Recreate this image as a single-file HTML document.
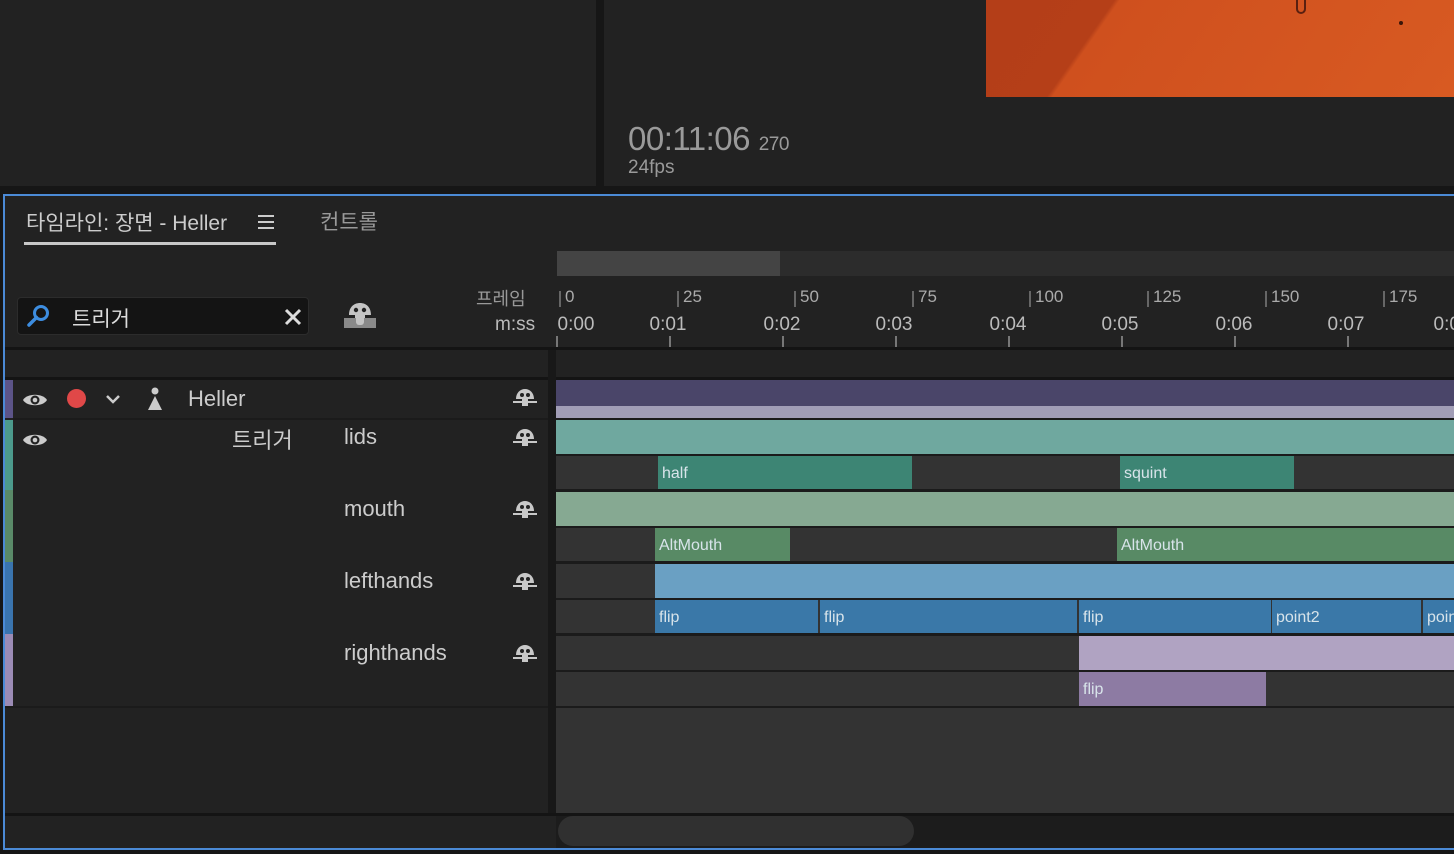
<!DOCTYPE html>
<html><head><meta charset="utf-8"><style>
*{margin:0;padding:0;box-sizing:border-box}
body{width:1454px;height:854px;background:#161616;position:relative;overflow:hidden;font-family:"Liberation Sans","Noto Sans CJK KR",sans-serif;color:#bbb}
.a{position:absolute}
.t{position:absolute;white-space:nowrap}
.clip{position:absolute;height:34px;color:#d8e4ea;font-size:16px;line-height:36px;padding-left:4px}
.fl{position:absolute;font-size:17px;color:#aaa;top:287px}
.fl:before{content:"";position:absolute;left:-6px;top:4px;width:2px;height:16px;background:#666}
.ms{position:absolute;font-size:19px;color:#bbb;top:314px;transform:translateX(-50%)}
.tk{position:absolute;top:336px;width:2px;height:11px;background:#777}
.lbl{position:absolute;font-size:22px;color:#ccc}
.ic{position:absolute;left:513px}
</style></head><body>
<div class="a" style="left:0;top:0;width:596px;height:186px;background:#222"></div>
<div class="a" style="left:604px;top:0;width:850px;height:186px;background:#222"></div>
<div class="a" style="left:986px;top:0;width:468px;height:97px;background:linear-gradient(125deg,#b43e18 0%,#b53f18 24%,#cf501e 25%,#d85a22 100%)"></div>
<div class="a" style="left:1296px;top:0;width:10px;height:14px;border:2px solid #5a2010;border-top:none;border-radius:0 0 6px 6px"></div>
<div class="a" style="left:1399px;top:21px;width:4px;height:4px;background:#3a1508;border-radius:2px"></div>
<div class="t" style="left:628px;top:120px;font-size:33px;color:#9a9a9a;letter-spacing:-0.5px">00:11:06 <span style="font-size:19px">270</span></div>
<div class="t" style="left:628px;top:157px;font-size:19px;color:#9a9a9a">24fps</div>

<div class="a" style="left:3px;top:194px;width:1454px;height:656px;background:#222;border:2px solid #4b8ad6;border-right:none"></div>
<div class="t" style="left:26px;top:207px;font-size:21px;color:#ccc">타임라인: 장면 - Heller</div>
<div class="a" style="left:258px;top:215px;width:16px;height:2px;background:#ccc;box-shadow:0 6px 0 #ccc,0 12px 0 #ccc"></div>
<div class="a" style="left:24px;top:242px;width:252px;height:3px;background:#c8c8c8"></div>
<div class="t" style="left:320px;top:206px;font-size:21px;color:#999">컨트롤</div>

<div class="a" style="left:557px;top:251px;width:897px;height:25px;background:#2c2c2c"></div>
<div class="a" style="left:557px;top:251px;width:223px;height:25px;background:#444"></div>

<div class="a" style="left:17px;top:297px;width:292px;height:38px;background:#141414;border:1px solid #2c2c2c;border-radius:4px"></div>
<svg class="a" style="left:26px;top:303px" width="26" height="26" viewBox="0 0 26 26"><circle cx="15" cy="10" r="6.5" fill="none" stroke="#3d8de0" stroke-width="3"/><path d="M10.5 14.5L3 22" stroke="#3d8de0" stroke-width="3.5" stroke-linecap="round"/></svg>
<div class="t" style="left:72px;top:303px;font-size:21px;color:#ddd">트리거</div>
<svg class="a" style="left:283px;top:307px" width="20" height="20"><path d="M3 3L17 17M17 3L3 17" stroke="#ddd" stroke-width="3"/></svg>
<svg class="a" style="left:344px;top:302px" width="32" height="28" viewBox="0 0 32 28"><path d="M5 13C5 5 10 1 16 1S27 5 27 13H21V20H11V13Z" fill="#c4c4c4"/><circle cx="12" cy="8" r="2.2" fill="#222"/><circle cx="20" cy="8" r="2.2" fill="#222"/><rect x="0" y="16" width="32" height="10" fill="#8a8a8a"/><rect x="12" y="13" width="8" height="10" rx="3" fill="#c4c4c4"/></svg>

<div class="t" style="left:476px;top:285px;font-size:18px;color:#999">프레임</div>
<div class="t" style="left:495px;top:314px;font-size:19px;color:#bbb">m:ss</div>

<div class="fl" style="left:565px">0</div><div class="fl" style="left:683px">25</div><div class="fl" style="left:800px">50</div><div class="fl" style="left:918px">75</div><div class="fl" style="left:1035px">100</div><div class="fl" style="left:1153px">125</div><div class="fl" style="left:1271px">150</div><div class="fl" style="left:1389px">175</div>
<div class="ms" style="left:576px">0:00</div><div class="ms" style="left:668px">0:01</div><div class="ms" style="left:782px">0:02</div><div class="ms" style="left:894px">0:03</div><div class="ms" style="left:1008px">0:04</div><div class="ms" style="left:1120px">0:05</div><div class="ms" style="left:1234px">0:06</div><div class="ms" style="left:1346px">0:07</div><div class="ms" style="left:1452px">0:08</div>
<div class="tk" style="left:556px"></div><div class="tk" style="left:669px"></div><div class="tk" style="left:782px"></div><div class="tk" style="left:895px"></div><div class="tk" style="left:1008px"></div><div class="tk" style="left:1121px"></div><div class="tk" style="left:1234px"></div><div class="tk" style="left:1347px"></div>
<div class="a" style="left:5px;top:347px;width:1449px;height:3px;background:#141414"></div>
<div class="a" style="left:5px;top:377px;width:1449px;height:3px;background:#141414"></div>

<div class="a" style="left:548px;top:350px;width:8px;height:466px;background:#181818"></div>
<div class="a" style="left:556px;top:380px;width:898px;height:433px;background:#333"></div>

<div class="a" style="left:5px;top:380px;width:8px;height:38px;background:#5c5488"></div>
<div class="a" style="left:5px;top:420px;width:8px;height:70px;background:#4c9a8c"></div>
<div class="a" style="left:5px;top:490px;width:8px;height:72px;background:#5a8a68"></div>
<div class="a" style="left:5px;top:562px;width:8px;height:72px;background:#3a74ae"></div>
<div class="a" style="left:5px;top:634px;width:8px;height:73px;background:#9b8bb5"></div>
<div class="a" style="left:13px;top:418px;width:535px;height:2px;background:#1b1b1b"></div>
<div class="a" style="left:5px;top:706px;width:543px;height:2px;background:#1b1b1b"></div>

<svg class="a" style="left:22px;top:390px" width="26" height="20" viewBox="0 0 26 20"><path d="M1 10C5 3 21 3 25 10C21 17 5 17 1 10Z" fill="#ccc"/><circle cx="13" cy="10" r="4.5" fill="#222"/><circle cx="13" cy="10" r="2.3" fill="#ccc"/></svg>
<svg class="a" style="left:22px;top:430px" width="26" height="20" viewBox="0 0 26 20"><path d="M1 10C5 3 21 3 25 10C21 17 5 17 1 10Z" fill="#ccc"/><circle cx="13" cy="10" r="4.5" fill="#222"/><circle cx="13" cy="10" r="2.3" fill="#ccc"/></svg>
<div class="a" style="left:67px;top:389px;width:19px;height:19px;border-radius:50%;background:#e04848"></div>
<svg class="a" style="left:104px;top:393px" width="18" height="12"><path d="M3 3L9 9L15 3" stroke="#ccc" stroke-width="2.5" fill="none"/></svg>
<svg class="a" style="left:145px;top:386px" width="20" height="26"><circle cx="10" cy="5" r="3.5" fill="#ccc"/><path d="M10 10L17 24H3Z" fill="#ccc"/></svg>
<div class="lbl" style="left:188px;top:386px">Heller</div>
<div class="lbl" style="left:232px;top:423px">트리거</div>
<div class="lbl" style="left:344px;top:424px">lids</div>
<div class="lbl" style="left:344px;top:496px">mouth</div>
<div class="lbl" style="left:344px;top:568px">lefthands</div>
<div class="lbl" style="left:344px;top:640px">righthands</div>
<svg class="ic" style="top:388px" width="24" height="20" viewBox="0 0 24 20"><path d="M3 11C3 5 7 1 12 1S21 5 21 11H15V18H9V11Z" fill="#c8c8c8"/><circle cx="9" cy="7" r="2" fill="#222"/><circle cx="15" cy="7" r="2" fill="#222"/><rect x="0" y="13" width="24" height="2" fill="#c8c8c8"/></svg>
<svg class="ic" style="top:428px" width="24" height="20" viewBox="0 0 24 20"><path d="M3 11C3 5 7 1 12 1S21 5 21 11H15V18H9V11Z" fill="#c8c8c8"/><circle cx="9" cy="7" r="2" fill="#222"/><circle cx="15" cy="7" r="2" fill="#222"/><rect x="0" y="13" width="24" height="2" fill="#c8c8c8"/></svg>
<svg class="ic" style="top:500px" width="24" height="20" viewBox="0 0 24 20"><path d="M3 11C3 5 7 1 12 1S21 5 21 11H15V18H9V11Z" fill="#c8c8c8"/><circle cx="9" cy="7" r="2" fill="#222"/><circle cx="15" cy="7" r="2" fill="#222"/><rect x="0" y="13" width="24" height="2" fill="#c8c8c8"/></svg>
<svg class="ic" style="top:572px" width="24" height="20" viewBox="0 0 24 20"><path d="M3 11C3 5 7 1 12 1S21 5 21 11H15V18H9V11Z" fill="#c8c8c8"/><circle cx="9" cy="7" r="2" fill="#222"/><circle cx="15" cy="7" r="2" fill="#222"/><rect x="0" y="13" width="24" height="2" fill="#c8c8c8"/></svg>
<svg class="ic" style="top:644px" width="24" height="20" viewBox="0 0 24 20"><path d="M3 11C3 5 7 1 12 1S21 5 21 11H15V18H9V11Z" fill="#c8c8c8"/><circle cx="9" cy="7" r="2" fill="#222"/><circle cx="15" cy="7" r="2" fill="#222"/><rect x="0" y="13" width="24" height="2" fill="#c8c8c8"/></svg>

<div class="a" style="left:556px;top:380px;width:898px;height:26px;background:#4a4569"></div>
<div class="a" style="left:556px;top:406px;width:898px;height:12px;background:#a19db6"></div>
<div class="a" style="left:556px;top:418px;width:898px;height:2px;background:#1b1b1b"></div>
<div class="a" style="left:556px;top:420px;width:898px;height:34px;background:#6fa89f"></div>
<div class="a" style="left:556px;top:454px;width:898px;height:2px;background:#1b1b1b"></div>
<div class="clip" style="left:658px;top:456px;width:254px;background:#3d8574">half</div>
<div class="clip" style="left:1120px;top:456px;width:174px;background:#3d8574">squint</div>
<div class="a" style="left:556px;top:489px;width:898px;height:3px;background:#1b1b1b"></div>
<div class="a" style="left:556px;top:492px;width:898px;height:34px;background:#86a992"></div>
<div class="a" style="left:556px;top:526px;width:898px;height:2px;background:#1b1b1b"></div>
<div class="clip" style="left:655px;top:528px;width:135px;background:#588a65">AltMouth</div>
<div class="clip" style="left:1117px;top:528px;width:337px;background:#588a65">AltMouth</div>
<div class="a" style="left:556px;top:561px;width:898px;height:3px;background:#1b1b1b"></div>
<div class="a" style="left:655px;top:564px;width:799px;height:34px;background:#6aa0c3"></div>
<div class="a" style="left:556px;top:598px;width:898px;height:2px;background:#1b1b1b"></div>
<div class="clip" style="left:655px;top:600px;width:163px;background:#3a78a8">flip</div>
<div class="clip" style="left:820px;top:600px;width:257px;background:#3a78a8">flip</div>
<div class="clip" style="left:1079px;top:600px;width:192px;background:#3a78a8">flip</div>
<div class="clip" style="left:1272px;top:600px;width:149px;background:#3a78a8">point2</div>
<div class="clip" style="left:1423px;top:600px;width:31px;background:#3a78a8;overflow:hidden">point</div>
<div class="a" style="left:556px;top:633px;width:898px;height:3px;background:#1b1b1b"></div>
<div class="a" style="left:1079px;top:636px;width:375px;height:34px;background:#b0a3c2"></div>
<div class="a" style="left:556px;top:670px;width:898px;height:2px;background:#1b1b1b"></div>
<div class="clip" style="left:1079px;top:672px;width:187px;background:#8d7ba3">flip</div>
<div class="a" style="left:556px;top:706px;width:898px;height:2px;background:#1b1b1b"></div>

<div class="a" style="left:5px;top:813px;width:1449px;height:3px;background:#141414"></div>
<div class="a" style="left:556px;top:816px;width:898px;height:32px;background:#1c1c1c"></div>
<div class="a" style="left:558px;top:816px;width:356px;height:30px;background:#303030;border-radius:15px"></div>
</body></html>
